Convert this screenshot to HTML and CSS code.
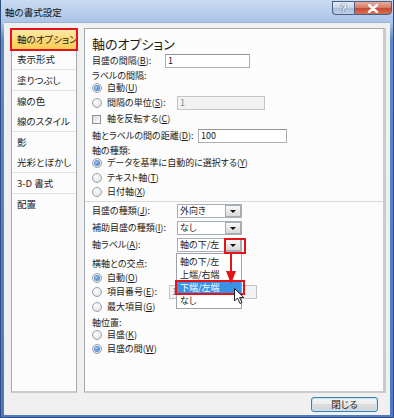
FILE: index.html
```html
<!DOCTYPE html>
<html lang="ja">
<head>
    <meta charset="UTF-8">
    <title>軸の書式設定</title>
    <link rel="stylesheet" href="styles.css">
</head>
<body>
    <div class="window">
        <div class="titlebar">
            <span class="title">軸の書式設定</span>
            <div class="caption">
                <span class="cap help">?</span>
                <span class="cap close">
                    <svg width="12" height="9" viewBox="0 0 12 9"><path d="M2 1 L10 8 M10 1 L2 8" stroke="#fff" stroke-width="2.4" stroke-linecap="round"/></svg>
                </span>
            </div>
        </div>

        <div class="frame">
            <div class="panels">
                <!-- 左側のカテゴリ一覧 -->
                <ul class="nav">
                    <li class="active">軸のオプション</li>
                    <li class="end">表示形式</li>
                    <li class="end">塗りつぶし</li>
                    <li>線の色</li>
                    <li class="end">線のスタイル</li>
                    <li>影</li>
                    <li class="end">光彩とぼかし</li>
                    <li class="end">3-D 書式</li>
                    <li>配置</li>
                </ul>

                <!-- 右側の設定項目 -->
                <div class="options">
                    <h2>軸のオプション</h2>
                    <div class="row field mt1"><span class="key key-s">目盛の間隔(<u>B</u>):</span><span class="input w85">1</span></div>
                    <div class="row mt3">ラベルの間隔:</div>
                    <div class="row mt2"><span class="radio on"></span>自動(<u>U</u>)</div>
                    <div class="row field mt3"><span class="key key-l"><span class="radio"></span>間隔の単位(<u>S</u>):</span><span class="input off w88">1</span></div>
                    <div class="row mt4"><span class="check"></span>軸を反転する(<u>C</u>)</div>
                    <div class="row field mt5"><span class="key key-xl">軸とラベルの間の距離(<u>D</u>):</span><span class="input w89">100</span></div>
                    <div class="row mt3">軸の種類:</div>
                    <div class="row mt2"><span class="radio on"></span>データを基準に自動的に選択する(<u>Y</u>)</div>
                    <div class="row mt5"><span class="radio"></span>テキスト軸(<u>T</u>)</div>
                    <div class="row mt4"><span class="radio"></span>日付軸(<u>X</u>)</div>
                    <div class="sep"></div>
                    <div class="row field mt2"><span class="key key-l">目盛の種類(<u>J</u>):</span><span class="select">外向き<span class="drop-btn"></span></span></div>
                    <div class="row field mt3"><span class="key key-l">補助目盛の種類(<u>I</u>):</span><span class="select">なし<span class="drop-btn"></span></span></div>
                    <div class="row field mt3"><span class="key key-l">軸ラベル(<u>A</u>):</span><span class="select">軸の下/左<span class="drop-btn"></span></span></div>
                    <div class="row mt7">横軸との交点:</div>
                    <div class="row mt4"><span class="radio on"></span>自動(<u>O</u>)</div>
                    <div class="row field mt2"><span class="key key-m"><span class="radio"></span>項目番号(<u>E</u>):</span><span class="input off w88">1</span></div>
                    <div class="row mt3"><span class="radio"></span>最大項目(<u>G</u>)</div>
                    <div class="row mt6">軸位置:</div>
                    <div class="row mt2"><span class="radio"></span>目盛(<u>K</u>)</div>
                    <div class="row mt4"><span class="radio on"></span>目盛の間(<u>W</u>)</div>

                    <!-- 開いたドロップダウンと注釈 -->
                    <div class="dropdown">
                        <div class="item">軸の下/左</div>
                        <div class="item">上端/右端</div>
                        <div class="item sel">下端/左端</div>
                        <div class="item">なし</div>
                    </div>
                    <div class="mark mark-btn"></div>
                    <div class="mark mark-item"></div>
                    <svg class="arrow" width="12" height="31" viewBox="0 0 12 31">
                        <path d="M6 0 V19" stroke="#e3151b" stroke-width="2"/>
                        <polygon points="1,17 11,17 6,30" fill="#e3151b"/>
                    </svg>
                    <svg class="pointer" width="11" height="17" viewBox="0 0 11 17">
                        <path d="M0.5 0.5 V13 L3.5 10 L6 15.5 L8 14.5 L5.6 9.5 H9.8 Z" fill="#fff" stroke="#222" stroke-width="1"/>
                    </svg>
                </div>
            </div>

            <div class="footer">
                <button class="close-btn">閉じる</button>
            </div>
        </div>
    </div>
</body>
</html>
```

FILE: styles.css
```css
* {
    box-sizing: border-box;
}

body {
    margin: 0;
    background: #6f93c9;
    font-family: "Noto Sans CJK JP", "Liberation Sans", sans-serif;
    font-size: 9.5px;
    font-feature-settings: "palt";
    color: #1b1b1b;
}

u {
    text-decoration: underline;
    text-underline-offset: 1px;
}

.window {
    width: 394px;
    height: 418px;
    display: flex;
    flex-direction: column;
    padding: 0 3px 2px 3px;
    border: 1px solid #2f4f82;
    border-top: none;
    background: linear-gradient(#c8daf0, #afc7e8 22px, #5f89c6 40px, #4e7abd);
}

/* タイトルバー */
.titlebar {
    height: 22px;
    margin: 0 -3px;
    padding: 0 1px 0 4px;
    display: flex;
    justify-content: space-between;
    background: linear-gradient(#c9dbf1, #b9cfec 50%, #abc4e7);
}

.title {
    line-height: 20px;
    padding-top: 2px;
    color: #111;
}

.caption {
    display: flex;
    margin-top: 1px;
    height: 14px;
}

.cap {
    height: 14px;
    display: flex;
    align-items: center;
    justify-content: center;
    border: 1px solid #4c5f80;
}

.help {
    width: 22px;
    border-right: none;
    border-radius: 0 0 0 4px;
    background: linear-gradient(#e2eaf5, #c3d3ea 50%, #a9bedc 50%, #bccfe9);
    color: #fff;
    font-family: "Liberation Sans", sans-serif;
    font-weight: bold;
    font-size: 11px;
    text-shadow: 0 0 1px #354a6b, 0 0 1px #354a6b;
}

.close {
    width: 38px;
    border-radius: 0 0 4px 0;
    background: linear-gradient(#e8ae9e, #d7775f 50%, #c54a31 50%, #d86d50);
}

/* 本体 */
.frame {
    flex: 1;
    display: flex;
    flex-direction: column;
    padding: 5px 4px 0 7px;
    background: #f0f0f0;
    border-top: 1px solid #9bb1d0;
}

.panels {
    height: 365px;
    display: flex;
    gap: 7px;
}

.nav {
    width: 66px;
    margin: 0;
    padding: 1px 0 0;
    list-style: none;
    background: #fcfcfc;
    border: 1px solid #a3a9b1;
    border-bottom: 2px solid #c9cbce;
}

.nav li {
    height: 20px;
    line-height: 20px;
    padding-left: 5px;
    white-space: nowrap;
}

.nav li.end {
    height: 21px;
    border-bottom: 1px solid #e3e3e3;
}

.nav li.active {
    height: 19px;
    line-height: 19px;
    background: linear-gradient(#fde9a6, #fcd979 50%, #f9cd55);
    outline: 2px solid #e5131a;
}

.options {
    flex: 1;
    position: relative;
    padding: 6px 0 0 7px;
    font-size: 9px;
    background: #fcfcfc;
    border: 1px solid #a3a9b1;
    border-right: 3px solid #c9cbce;
    border-bottom: 2px solid #c9cbce;
}

.options h2 {
    margin: 0;
    height: 18px;
    line-height: 18px;
    font-size: 13px;
    font-weight: normal;
}

.row {
    display: flex;
    align-items: center;
    height: 10px;
    line-height: 10px;
    white-space: nowrap;
}

.row.field {
    height: 14px;
}

.mt1 { margin-top: 1px; }
.mt2 { margin-top: 2px; }
.mt3 { margin-top: 3px; }
.mt4 { margin-top: 4px; }
.mt5 { margin-top: 5px; }
.mt6 { margin-top: 6px; }
.mt7 { margin-top: 7px; }

.key {
    display: flex;
    align-items: center;
    flex: none;
}

.key-s { width: 73px; }
.key-m { width: 77px; }
.key-l { width: 85px; }
.key-xl { width: 106px; }

.radio {
    position: relative;
    flex: none;
    width: 10px;
    height: 10px;
    margin-right: 5px;
    border-radius: 50%;
    border: 1px solid #9aa1a8;
    background: radial-gradient(circle at 40% 35%, #ffffff, #d9dadb);
}

.radio.on::after {
    content: '';
    position: absolute;
    left: 2px;
    top: 2px;
    width: 4px;
    height: 4px;
    border-radius: 50%;
    background: radial-gradient(circle at 35% 35%, #9fd0f7, #1f5fb0);
    box-shadow: 0 0 0 1px #5d8fce;
}

.check {
    flex: none;
    width: 9px;
    height: 9px;
    margin-right: 6px;
    border: 1px solid #8e9297;
    background: linear-gradient(135deg, #d8d9da, #ffffff);
}

.input {
    height: 14px;
    line-height: 12px;
    padding-left: 2px;
    background: #fff;
    border: 1px solid #abadb3;
    border-top-color: #8f9399;
}

.input.off {
    background: #f2f2f2;
    border-color: #c2c4c7;
    color: #8a8a8a;
}

.w85 { width: 85px; }
.w88 { width: 88px; }
.w89 { width: 89px; }

.select {
    width: 65px;
    height: 14px;
    display: flex;
    align-items: center;
    justify-content: space-between;
    padding-left: 2px;
    background: #fff;
    border: 1px solid #a8aeb5;
}

.drop-btn {
    width: 16px;
    height: 12px;
    display: flex;
    align-items: center;
    justify-content: center;
    border: 1px solid #a5abb3;
    background: linear-gradient(#fafafa, #e8e8e8 50%, #d9d9d9);
}

.drop-btn::after {
    content: '';
    border-left: 3px solid transparent;
    border-right: 3px solid transparent;
    border-top: 3px solid #111;
}

.sep {
    height: 1px;
    margin: 4px 0 0 -7px;
    background: #d9d9d9;
}

/* ドロップダウン一覧 */
.dropdown {
    position: absolute;
    left: 91px;
    top: 224px;
    width: 66px;
    height: 56px;
    padding-top: 1px;
    background: #fff;
    border: 1px solid #9ea3a9;
}

.dropdown .item {
    height: 13px;
    line-height: 13px;
    padding-left: 3px;
    white-space: nowrap;
}

.dropdown .item.sel {
    background: #3b90e8;
    color: #fff;
}

.mark {
    position: absolute;
    border: 2px solid #e5131a;
}

.mark-btn {
    left: 139px;
    top: 209px;
    width: 22px;
    height: 16px;
}

.mark-item {
    left: 90px;
    top: 251px;
    width: 70px;
    height: 15px;
}

.arrow {
    position: absolute;
    left: 140px;
    top: 225px;
}

.pointer {
    position: absolute;
    left: 149px;
    top: 259px;
}

/* 下部ボタン */
.footer {
    display: flex;
    justify-content: flex-end;
    padding: 4px 8px 0 0;
}

.close-btn {
    width: 67px;
    height: 15px;
    padding: 0;
    font: inherit;
    line-height: 13px;
    color: #1b1b1b;
    border: 1px solid #3c7fb1;
    border-radius: 3px;
    background: linear-gradient(#f4f4f4, #ececec 50%, #dedede 50%, #d3d3d3);
    box-shadow: inset 0 0 0 1px #c4e5f6;
}
```
